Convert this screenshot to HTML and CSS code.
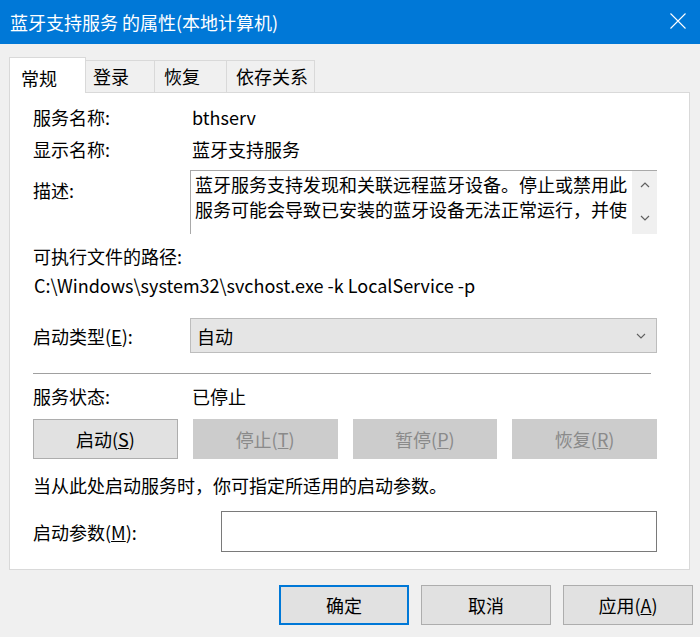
FILE: index.html
```html
<!DOCTYPE html>
<html lang="zh-CN">
<head>
<meta charset="utf-8">
<title>蓝牙支持服务 的属性(本地计算机)</title>
<link rel="stylesheet" href="styles.css">
</head>
<body>
<div class="window">
  <div class="titlebar">
    <span class="title">蓝牙支持服务 的属性(本地计算机)</span>
    <svg class="close" width="16" height="16" viewBox="0 0 16 16"><path d="M0.5 0.5 L15.5 15.5 M15.5 0.5 L0.5 15.5" stroke="#fff" stroke-width="1.1" fill="none"/></svg>
  </div>
  <div class="body">
    <div class="tabs">
      <div class="tab active t1">常规</div>
      <div class="tab t2">登录</div>
      <div class="tab t3">恢复</div>
      <div class="tab t4">依存关系</div>
    </div>
    <div class="panel">
      <div class="row r-name"><span class="label">服务名称:</span><span class="value">bthserv</span></div>
      <div class="row r-display"><span class="label">显示名称:</span><span class="value">蓝牙支持服务</span></div>
      <div class="row r-desc">
        <span class="label desc-label">描述:</span>
        <div class="descbox">
          <div class="desctext">
            <div class="descline">蓝牙服务支持发现和关联远程蓝牙设备。停止或禁用此</div>
            <div class="descline">服务可能会导致已安装的蓝牙设备无法正常运行，并使</div>
          </div>
          <div class="scroll">
            <svg width="10" height="6" viewBox="0 0 10 6"><path d="M1 5 L5 1 L9 5" stroke="#606060" stroke-width="1.2" fill="none"/></svg>
            <svg width="10" height="6" viewBox="0 0 10 6"><path d="M1 1 L5 5 L9 1" stroke="#606060" stroke-width="1.2" fill="none"/></svg>
          </div>
        </div>
      </div>
      <div class="line r-pathlabel">可执行文件的路径:</div>
      <div class="line r-path">C:\Windows\system32\svchost.exe -k LocalService -p</div>
      <div class="row r-type">
        <span class="label">启动类型(<u>E</u>):</span>
        <div class="combo">
          <span>自动</span>
          <svg width="10" height="6" viewBox="0 0 10 6"><path d="M1 1 L5 5 L9 1" stroke="#606060" stroke-width="1.1" fill="none"/></svg>
        </div>
      </div>
      <div class="sep"></div>
      <div class="row r-status"><span class="label">服务状态:</span><span class="value">已停止</span></div>
      <div class="svc-buttons">
        <div class="btn">启动(<u>S</u>)</div>
        <div class="btn disabled">停止(<u>T</u>)</div>
        <div class="btn disabled">暂停(<u>P</u>)</div>
        <div class="btn disabled">恢复(<u>R</u>)</div>
      </div>
      <div class="line r-hint">当从此处启动服务时，你可指定所适用的启动参数。</div>
      <div class="row r-param">
        <span class="label">启动参数(<u>M</u>):</span>
        <div class="input"></div>
      </div>
    </div>
    <div class="actions">
      <div class="btn dlg default">确定</div>
      <div class="btn dlg">取消</div>
      <div class="btn dlg">应用(<u>A</u>)</div>
    </div>
  </div>
</div>
</body>
</html>
```

FILE: styles.css
```css
* { box-sizing: border-box; }
html, body {
  margin: 0;
  padding: 0;
}
body {
  width: 700px;
  height: 637px;
  overflow: hidden;
  background: #f0f0f0;
  font-family: "Noto Sans CJK SC", "Noto Sans", sans-serif;
  font-size: 18px;
  color: #000;
}
.window {
  width: 700px;
  height: 637px;
  background: #f0f0f0;
}
.titlebar {
  height: 44px;
  background: #0078d7;
  color: #fff;
  display: flex;
  align-items: center;
  justify-content: space-between;
  padding: 0 14px 0 10px;
}
.title {
  font-size: 18px;
  line-height: 24px;
}
.close {
  display: block;
  margin-top: -2px;
}
.body {
  padding: 13px 10px 0 9px;
}
.tabs {
  display: flex;
  align-items: flex-end;
  height: 36px;
  border-bottom: 1px solid #d9d9d9;
}
.tab {
  height: 32px;
  border: 1px solid #d9d9d9;
  border-bottom: none;
  border-left: none;
  background: #f0f0f0;
  line-height: 30px;
  padding-left: 8px;
  white-space: nowrap;
}
.tab.active {
  height: 36px;
  margin-bottom: -1px;
  background: #fff;
  border-left: 1px solid #d9d9d9;
  line-height: 40px;
  padding-left: 11px;
}
.t1 { width: 77px; }
.t2 { width: 69px; padding-left: 7px; }
.t3 { width: 72px; padding-left: 9px; }
.t4 { width: 88px; padding-left: 9px; }
.panel {
  background: #fff;
  border: 1px solid #d9d9d9;
  border-top: none;
  height: 477px;
  padding: 12px 32px 0 23px;
  display: flex;
  flex-direction: column;
}
.row {
  display: grid;
  grid-template-columns: 157px 1fr;
  align-items: center;
}
.label, .value, .line {
  line-height: 24px;
  white-space: nowrap;
}
.value { padding-left: 2px; }
.r-display { margin-top: 8px; }
.r-desc {
  margin-top: 9px;
  align-items: start;
}
.desc-label { padding-top: 8px; }
.descbox {
  height: 64px;
  display: flex;
  border-top: 1px solid #a9a9a9;
  border-left: 1px solid #a9a9a9;
}
.desctext {
  flex: 1;
  padding: 1px 0 0 4px;
}
.descline {
  line-height: 25px;
  white-space: nowrap;
}
.scroll {
  width: 25px;
  background: #f0f0f0;
  display: flex;
  flex-direction: column;
  align-items: center;
  justify-content: space-between;
  padding: 11px 0 13px;
}
.scroll svg { display: block; }
.r-pathlabel { margin-top: 10px; }
.r-path { margin-top: 5px; padding-left: 1px; }
.r-type { margin-top: 21px; }
.combo {
  height: 35px;
  background: #e5e5e5;
  border: 1px solid #bdbdbd;
  display: flex;
  align-items: center;
  justify-content: space-between;
  padding: 0 10px 0 6px;
}
.sep {
  margin-top: 20px;
  margin-right: 6px;
  height: 1px;
  background: #a0a0a0;
}
.r-status { margin-top: 10px; }
.svc-buttons {
  margin-top: 11px;
  display: grid;
  grid-template-columns: repeat(4, 1fr);
  column-gap: 15px;
}
.btn {
  height: 40px;
  background: #e1e1e1;
  border: 1px solid #adadad;
  display: flex;
  align-items: center;
  justify-content: center;
  white-space: nowrap;
}
.btn.disabled {
  background: #cccccc;
  border-color: #cccccc;
  color: #8a8a8a;
}
.r-hint { margin-top: 14px; }
.r-param {
  margin-top: 14px;
  grid-template-columns: 188px 1fr;
}
.input {
  height: 41px;
  border: 1px solid #7a7a7a;
  background: #fff;
}
.actions {
  margin-top: 15px;
  display: flex;
  justify-content: flex-end;
  column-gap: 12px;
  margin-right: -3px;
}
.btn.dlg { width: 130px; }
.btn.default {
  border: 2px solid #0078d7;
}
```
